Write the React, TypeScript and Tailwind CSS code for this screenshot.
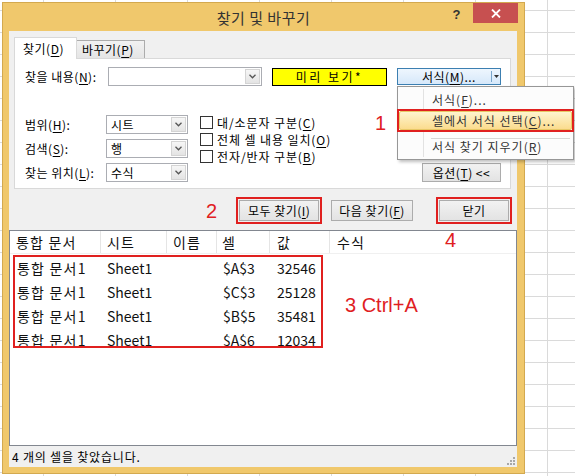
import React from 'react';

function Chevron() {
  return (
    <svg width="7" height="5" viewBox="0 0 7 5">
      <path d="M0.5 0.8 L3.5 3.8 L6.5 0.8" fill="none" stroke="#555" strokeWidth="1.3" />
    </svg>
  );
}

function U({ children }: { children: React.ReactNode }) {
  return <span className="underline decoration-1 underline-offset-[2px]">{children}</span>;
}

function Select({ value }: { value: string }) {
  return (
    <div className="flex h-[19px] w-[82px] border border-[#abadb3] bg-white">
      <div className="flex-1 pl-[4px] text-[12px] leading-[17px]">{value}</div>
      <div className="m-[1px] flex w-[15px] items-center justify-center border border-[#d4d4d4] bg-[linear-gradient(#f6f6f6,#e4e4e4)]">
        <Chevron />
      </div>
    </div>
  );
}

function Btn({ w, children }: { w: string; children: React.ReactNode }) {
  return (
    <div
      className={`flex h-[21px] ${w} items-center justify-center border border-[#acacac] bg-[linear-gradient(#f2f2f2,#e3e3e3)] text-[12px] leading-none`}
    >
      {children}
    </div>
  );
}

function Checkbox({ children }: { children: React.ReactNode }) {
  return (
    <div className="flex h-[17px] items-center">
      <div className="h-[13px] w-[13px] border border-[#333] bg-white" />
      <div className="ml-[4px] leading-none">{children}</div>
    </div>
  );
}

export default function App() {
  const red = 'border-[#e0201f]';
  const selects: [string, string, string][] = [
    ['범위', 'H', '시트'],
    ['검색', 'S', '행'],
    ['찾는 위치', 'L', '수식'],
  ];
  const rows = [
    ['$A$3', '32546'],
    ['$C$3', '25128'],
    ['$B$5', '35481'],
    ['$A$6', '12034'],
  ];
  return (
    <div className="relative h-[476px] w-[575px] overflow-hidden bg-white bg-[linear-gradient(to_right,#dadada_1px,transparent_1px),linear-gradient(to_bottom,#dadada_1px,transparent_1px)] [background-size:72px_22px] [background-position:43px_10px] font-['Noto_Sans_CJK_KR','Noto_Sans',sans-serif] text-[12px] tracking-[0.5px] text-black">
      <div className="pl-[2px] pt-[2px]">
        <div className="flex h-[472px] w-[523px] flex-col border border-[#d3a94f] bg-[#f0c86c] pb-[6px] pl-[6px] pr-[7px]">
          {/* title bar */}
          <div className="-mr-[1px] grid h-[28px] grid-cols-[1fr_auto_1fr]">
            <div />
            <div className="flex items-center text-[15px] leading-none tracking-[0.5px] text-[#333]">찾기 및 바꾸기</div>
            <div className="flex items-start justify-end">
              <div className="mr-[12px] mt-[5px] font-['Liberation_Sans',sans-serif] text-[13px] font-bold leading-none text-[#333]">?</div>
              <div className="flex h-[20px] w-[45px] items-center justify-center bg-[#c75050]">
                <svg width="10" height="9" viewBox="0 0 10 9">
                  <path d="M1 0.5 L9 8.5 M9 0.5 L1 8.5" stroke="white" strokeWidth="1.8" />
                </svg>
              </div>
            </div>
          </div>

          {/* client */}
          <div className="flex flex-1 flex-col bg-[#f0f0f0]">
            <div className="ml-[5px] mr-[6px] mt-[6px]">
              <div className="relative z-10 -mb-px flex h-[22px] items-end">
                <div className="flex h-[22px] w-[63px] items-center border border-b-0 border-[#d9d9d9] bg-white pl-[8px] leading-none">
                  찾기(<U>D</U>)
                </div>
                <div className="mb-px flex h-[18px] w-[68px] items-center border border-b-0 border-l-0 border-[#acacac] bg-[linear-gradient(#f2f2f2,#e5e5e5)] pl-[5px] leading-none">
                  바꾸기(<U>P</U>)
                </div>
              </div>
              <div className="border border-[#d9d9d9] bg-white pb-[6px] pl-[10px] pr-[9px] pt-[8px]">
                <div className="flex h-[19px] items-center">
                  <div className="w-[83px] leading-none">
                    찾을 내용(<U>N</U>):
                  </div>
                  <div className="flex h-[19px] w-[154px] border border-[#abadb3] bg-white">
                    <div className="flex-1" />
                    <div className="m-[1px] flex w-[15px] items-center justify-center border border-[#d4d4d4] bg-[linear-gradient(#f6f6f6,#e4e4e4)]">
                      <Chevron />
                    </div>
                  </div>
                  <div className="ml-[10px] flex h-[18px] w-[115px] items-center justify-center border border-black bg-[#ffff00] leading-none tracking-[2.5px]">
                    미리 보기*
                  </div>
                  <div className="ml-[10px] flex h-[17px] w-[104px] border border-[#3c7fb1] bg-[linear-gradient(#eef6fe,#d6e8fa)]">
                    <div className="flex flex-1 items-center pl-[24px] leading-none">
                      서식(<U>M</U>)...
                    </div>
                    <div className="my-[2px] w-px bg-[#7aa6cc]" />
                    <div className="flex w-[8px] items-center justify-center">
                      <svg width="5" height="3" viewBox="0 0 5 3">
                        <path d="M0 0 L5 0 L2.5 3 Z" fill="#333" />
                      </svg>
                    </div>
                  </div>
                </div>

                <div className="mt-[29px] flex">
                  <div className="flex flex-col gap-[5px]">
                    {selects.map(([l, k, v]) => (
                      <div key={l} className="flex h-[19px] items-center">
                        <div className="w-[81px] leading-none">
                          {l}(<U>{k}</U>):
                        </div>
                        <Select value={v} />
                      </div>
                    ))}
                  </div>
                  <div className="-mt-[1px] ml-[12px] flex flex-col tracking-[0.9px]">
                    <Checkbox>
                      대/소문자 구분(<U>C</U>)
                    </Checkbox>
                    <Checkbox>
                      전체 셀 내용 일치(<U>O</U>)
                    </Checkbox>
                    <Checkbox>
                      전자/반자 구분(<U>B</U>)
                    </Checkbox>
                  </div>
                  <div className="ml-auto self-end">
                    <div className="flex h-[19px] w-[79px] items-center justify-center border border-[#acacac] bg-[linear-gradient(#f2f2f2,#e3e3e3)] leading-none">
                      옵션(<U>T</U>) &lt;&lt;
                    </div>
                  </div>
                </div>
              </div>
            </div>

            {/* buttons */}
            <div className="mt-[8px] flex h-[27px] items-center pl-[197px]">
              <span className="font-['Liberation_Sans',sans-serif] text-[20px] leading-none tracking-normal text-[#e0201f]">2</span>
              <div className={`ml-[19px] border-2 ${red} p-[1px]`}>
                <Btn w="w-[80px]">
                  모두 찾기(<U>I</U>)
                </Btn>
              </div>
              <div className="ml-[9px]">
                <Btn w="w-[82px]">
                  다음 찾기(<U>F</U>)
                </Btn>
              </div>
              <div className={`ml-[23px] border-2 ${red} p-[1px]`}>
                <Btn w="w-[70px]">닫기</Btn>
              </div>
            </div>

            {/* list */}
            <div className="mt-[6px] flex flex-1 flex-col border border-[#828790] bg-white text-[14px] tracking-normal text-[#111]">
              <div className="flex h-[23px] border-b border-[#f0f0f0] tracking-[1.2px]">
                <div className="flex w-[91px] items-center border-r border-[#e5e5e5] pl-[6px]">통합 문서</div>
                <div className="flex w-[66px] items-center border-r border-[#e5e5e5] pl-[6px]">시트</div>
                <div className="flex w-[50px] items-center border-r border-[#e5e5e5] pl-[6px]">이름</div>
                <div className="flex w-[53px] items-center border-r border-[#e5e5e5] pl-[5px]">셀</div>
                <div className="flex w-[60px] items-center border-r border-[#e5e5e5] pl-[7px]">값</div>
                <div className="flex flex-1 items-center pl-[7px]">수식</div>
              </div>
              <div className="pt-[2px]">
                {rows.map(([c, v]) => (
                  <div key={c} className="flex h-[24px] items-center leading-none">
                    <div className="w-[91px] pl-[7px] tracking-[1.2px]">통합 문서1</div>
                    <div className="w-[66px] pl-[6px]">Sheet1</div>
                    <div className="w-[50px]" />
                    <div className="w-[53px] pl-[6px]">{c}</div>
                    <div className="w-[60px] pl-[7px]">{v}</div>
                  </div>
                ))}
              </div>
            </div>

            {/* status bar */}
            <div className="flex h-[21px] items-center pl-[3px] leading-none tracking-[0.8px]">
              4 개의 셀을 찾았습니다.
              <svg className="mb-[2px] ml-auto mr-[2px] self-end" width="8" height="8" viewBox="0 0 8 8">
                <rect x="6" y="0" width="2" height="2" fill="#a8a8a8" />
                <rect x="3" y="3" width="2" height="2" fill="#a8a8a8" />
                <rect x="6" y="3" width="2" height="2" fill="#a8a8a8" />
                <rect x="0" y="6" width="2" height="2" fill="#a8a8a8" />
                <rect x="3" y="6" width="2" height="2" fill="#a8a8a8" />
                <rect x="6" y="6" width="2" height="2" fill="#a8a8a8" />
              </svg>
            </div>
          </div>
        </div>
      </div>

      {/* dropdown menu */}
      <div className="absolute left-[397px] top-[86px] h-[74px] w-[177px] border border-[#979797] bg-[#fcfcfc] pt-[3px] tracking-[1px] shadow-[2px_2px_3px_rgba(0,0,0,0.25)]">
        <div className="absolute bottom-[2px] left-[25px] top-[2px] w-px bg-[#e2e2e2]" />
        <div className="flex h-[20px] items-center pl-[34px] leading-none text-[#333]">
          서식(<U>F</U>)...
        </div>
        <div className={`relative -mx-[1px] -mt-[1px] h-[23px] border-2 ${red}`}>
          <div className="flex h-full items-center rounded-[2px] border border-[#e8c866] bg-[linear-gradient(#fef4cf,#fbdc8e)] pl-[32px] leading-none text-[#333]">
            셀에서 서식 선택(<U>C</U>)...
          </div>
        </div>
        <div className="ml-[33px] mr-[3px] mt-[6px] h-px bg-[#d7d7d7]" />
        <div className="flex h-[16px] items-center pl-[34px] leading-none text-[#333]">
          서식 찾기 지우기(<U>R</U>)
        </div>
      </div>

      {/* annotations */}
      <div className="absolute left-[375px] top-[113px] font-['Liberation_Sans',sans-serif] text-[20px] leading-none tracking-normal text-[#e0201f]">1</div>
      <div className="absolute left-[445px] top-[230px] font-['Liberation_Sans',sans-serif] text-[20px] leading-none tracking-normal text-[#e0201f]">4</div>
      <div className={`absolute left-[13px] top-[255px] h-[93px] w-[310px] border-2 ${red}`} />
      <div className="absolute left-[345px] top-[295px] font-['Liberation_Sans',sans-serif] text-[20px] leading-none tracking-normal text-[#e0201f]">3 Ctrl+A</div>
    </div>
  );
}
